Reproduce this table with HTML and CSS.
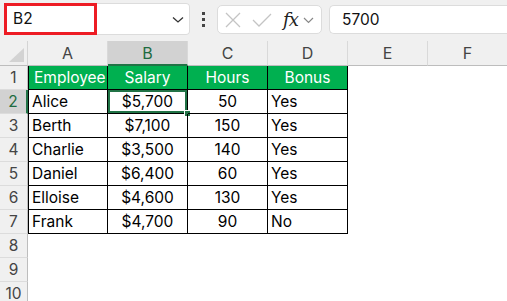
FILE: index.html
```html
<!DOCTYPE html>
<html>
<head>
<meta charset="utf-8">
<link rel="stylesheet" href="styles.css">
</head>
<body>
<div class="app">
  <div class="fbar">
    <div class="namebox">
      <div class="nameval">B2</div>
      <svg class="chev" width="12" height="8" viewBox="0 0 12 8"><path d="M1 1.5 L6 6 L11 1.5" fill="none" stroke="#333" stroke-width="1.3"/></svg>
    </div>
    <div class="dots"><span></span><span></span><span></span></div>
    <div class="funcs">
      <svg width="18" height="18" viewBox="0 0 18 18"><path d="M2 2 L16 16 M16 2 L2 16" stroke="#c4c4c4" stroke-width="1.3" fill="none"/></svg>
      <svg class="check" width="20" height="16" viewBox="0 0 20 16"><path d="M1 8 L7 14 L19 2" stroke="#c4c4c4" stroke-width="1.3" fill="none"/></svg>
      <span class="fx">fx</span>
      <svg class="chev2" width="11" height="7" viewBox="0 0 11 7"><path d="M1 1 L5.5 5.5 L10 1" fill="none" stroke="#888" stroke-width="1.2"/></svg>
    </div>
    <div class="formula">5700</div>
  </div>
  <div class="sheet">
    <div class="hd corner"><div class="tri"></div></div>
    <div class="hd col">A</div>
    <div class="hd col sel">B</div>
    <div class="hd col">C</div>
    <div class="hd col">D</div>
    <div class="hd col">E</div>
    <div class="hd col last">F</div>

    <div class="hd row">1</div>
    <div class="c th first">Employee</div>
    <div class="c th">Salary</div>
    <div class="c th">Hours</div>
    <div class="c th">Bonus</div>
    <div class="e"></div><div class="e"></div>

    <div class="hd row sel">2</div>
    <div class="c first">Alice</div>
    <div class="c num active">$5,700<span class="handle"></span></div>
    <div class="c num">50</div>
    <div class="c">Yes</div>
    <div class="e"></div><div class="e"></div>

    <div class="hd row">3</div>
    <div class="c first">Berth</div>
    <div class="c num">$7,100</div>
    <div class="c num">150</div>
    <div class="c">Yes</div>
    <div class="e"></div><div class="e"></div>

    <div class="hd row">4</div>
    <div class="c first">Charlie</div>
    <div class="c num">$3,500</div>
    <div class="c num">140</div>
    <div class="c">Yes</div>
    <div class="e"></div><div class="e"></div>

    <div class="hd row">5</div>
    <div class="c first">Daniel</div>
    <div class="c num">$6,400</div>
    <div class="c num">60</div>
    <div class="c">Yes</div>
    <div class="e"></div><div class="e"></div>

    <div class="hd row">6</div>
    <div class="c first">Elloise</div>
    <div class="c num">$4,600</div>
    <div class="c num">130</div>
    <div class="c">Yes</div>
    <div class="e"></div><div class="e"></div>

    <div class="hd row">7</div>
    <div class="c first">Frank</div>
    <div class="c num">$4,700</div>
    <div class="c num">90</div>
    <div class="c">No</div>
    <div class="e"></div><div class="e"></div>

    <div class="hd row">8</div>
    <div class="e"></div><div class="e"></div><div class="e"></div><div class="e"></div><div class="e"></div><div class="e"></div>
    <div class="hd row">9</div>
    <div class="e"></div><div class="e"></div><div class="e"></div><div class="e"></div><div class="e"></div><div class="e"></div>
    <div class="hd row">10</div>
    <div class="e"></div><div class="e"></div><div class="e"></div><div class="e"></div><div class="e"></div><div class="e"></div>
  </div>
</div>
</body>
</html>
```
FILE: styles.css
```css
* { box-sizing: border-box; }
html, body { margin: 0; padding: 0; background: #fff; }
body { width: 507px; height: 301px; overflow: hidden; font-family: Inter, "Noto Sans", sans-serif; }
.app { width: 507px; height: 301px; overflow: hidden; }

.fbar {
  height: 41px;
  background: #f0f0f0;
  display: flex;
  align-items: center;
  padding-left: 4px;
}
.namebox {
  width: 186px;
  height: 32px;
  background: #fff;
  border-radius: 4px;
  display: flex;
  align-items: center;
  margin-top: -3px;
  box-shadow: inset 0 0 0 1px #dcdcdc;
}
.nameval {
  width: 93px;
  height: 32px;
  border: 3px solid #ed1c24;
  padding-left: 6px;
  font-size: 15.5px;
  line-height: 26px;
  color: #111;
}
.chev { margin-left: 75px; margin-top: 2px; }
.dots {
  width: 27px;
  display: flex;
  flex-direction: column;
  align-items: center;
  gap: 3px;
  margin-top: -2px;
}
.dots span { width: 3px; height: 3px; background: #444; display: block; }
.funcs {
  width: 105px;
  height: 29px;
  background: #fff;
  border: 1px solid #dcdcdc;
  border-radius: 5px;
  display: flex;
  align-items: center;
  padding-left: 6px;
  margin-top: -2px;
}
.check { margin-left: 10px; }
.fx {
  font-family: "DejaVu Serif", "Liberation Serif", serif;
  font-style: italic;
  font-size: 18px;
  color: #222;
  margin-left: 11px;
  letter-spacing: -1px;
}
.chev2 { margin-left: 5px; margin-top: 2px; }
.formula {
  margin-left: 7px;
  flex: 1;
  height: 29px;
  background: #fff;
  border: 1px solid #dcdcdc;
  border-right: none;
  border-radius: 5px 0 0 5px;
  padding-left: 12px;
  font-size: 15.5px;
  line-height: 27px;
  color: #111;
  margin-top: -2px;
}

.sheet {
  display: grid;
  grid-template-columns: 28px 80px 80px 80px 80px 80px 79px;
  grid-template-rows: 25px repeat(10, 24px);
  font-size: 15.5px;
}
.hd {
  background: #f0f0f0;
  color: #444;
  display: flex;
  align-items: center;
  justify-content: center;
}
.corner { position: relative; border-bottom: 1px solid #bdbdbd; border-right: 1px solid #d4d4d4; }
.tri {
  position: absolute;
  right: 3px;
  bottom: 3px;
  width: 0; height: 0;
  border-left: 15px solid transparent;
  border-bottom: 14px solid #d3d3d3;
}
.col {
  border-right: 1px solid #d9d9d9;
  border-bottom: 1px solid #bdbdbd;
  font-size: 16px;
}
.col.last { border-right: none; }
.col.sel { background: #d2d2d2; border-bottom: 2px solid #217346; color: #1e6b40; }
.row {
  border-right: 1px solid #bdbdbd;
  border-bottom: 1px solid #dcdcdc;
  font-size: 15.5px;
}
.row.sel { background: #d2d2d2; border-right: 2px solid #217346; color: #1e6b40; }

.c {
  border-right: 1px solid #000;
  border-bottom: 1px solid #000;
  padding-left: 3px;
  display: flex;
  align-items: center;
  color: #000;
  white-space: nowrap;
  position: relative;
}
.c.first { border-left: 1px solid #000; }
.c.th { background: #00b050; color: #fff; justify-content: center; padding-left: 0; }
.c.th.first { justify-content: flex-start; padding-left: 5px; }
.c.num { justify-content: center; padding-left: 0; }
.c.active { box-shadow: inset 0 0 0 2px #217346; }
.handle {
  position: absolute;
  right: -4px;
  bottom: -4px;
  width: 7px;
  height: 7px;
  background: #217346;
  border: 1px solid #fff;
}
.e { background: #fff; }
```
